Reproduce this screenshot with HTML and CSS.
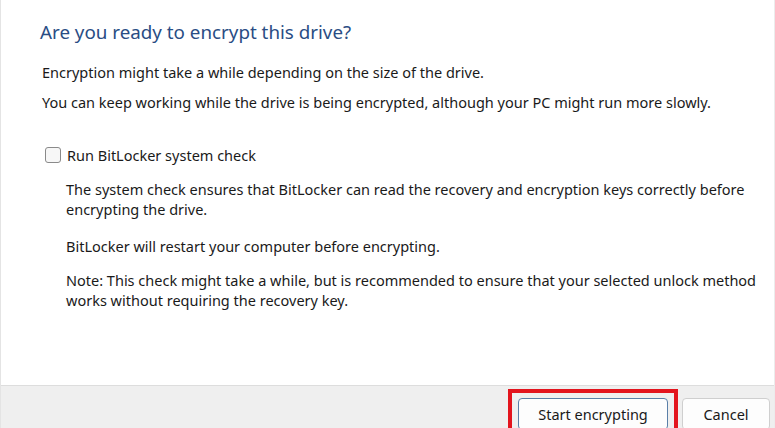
FILE: index.html
```html
<!DOCTYPE html>
<html lang="en">

<head>
    <title>BitLocker Drive Encryption</title>
    <link rel="stylesheet" href="styles.css">
</head>

<body>
    <div class="window">
        <div class="content">
            <h1 class="title">Are you ready to encrypt this drive?</h1>
            <p class="intro">Encryption might take a while depending on the size of the drive.</p>
            <p class="intro">You can keep working while the drive is being encrypted, although your PC might run more slowly.</p>

            <label class="check-row">
                <input type="checkbox" id="system-check">
                <span>Run BitLocker system check</span>
            </label>

            <div class="details">
                <p>The system check ensures that BitLocker can read the recovery and encryption keys correctly before encrypting the drive.</p>
                <p>BitLocker will restart your computer before encrypting.</p>
                <p class="note">Note: This check might take a while, but is recommended to ensure that your selected unlock method works without requiring the recovery key.</p>
            </div>
        </div>
        <div class="footer">
            <div class="highlight">
                <button class="btn btn-default">Start encrypting</button>
            </div>
            <button class="btn">Cancel</button>
        </div>
    </div>
</body>

</html>
```

FILE: styles.css
```css
* {
    margin: 0;
    padding: 0;
    box-sizing: border-box;
}

body {
    width: 775px;
    height: 428px;
    overflow: hidden;
    background: #ffffff;
    font-family: "Noto Sans", "Open Sans", sans-serif;
    font-size: 14.5px;
    color: #1a1a1a;
}

.window {
    height: 428px;
    display: flex;
    flex-direction: column;
    border-left: 1px solid #e4e4e4;
    border-right: 1px solid #ececec;
}

.content {
    flex: 1;
    padding: 19px 0 0 41px;
}

.title {
    font-size: 18.8px;
    font-weight: normal;
    color: #2a4d84;
    line-height: 26px;
    margin-left: -2px;
}

.intro {
    margin-top: 17px;
    line-height: 20px;
}

.intro + .intro {
    margin-top: 10px;
}

.check-row {
    display: flex;
    align-items: center;
    gap: 6px;
    margin-top: 33px;
    margin-left: 3px;
    line-height: 20px;
}

.check-row input {
    appearance: none;
    width: 16px;
    height: 16px;
    border: 1px solid #8a8a8a;
    border-radius: 3px;
    background: #f7f7f7;
}

.details {
    padding-left: 24px;
    padding-right: 8px;
    margin-top: 14px;
    line-height: 20px;
}

.details p + p {
    margin-top: 17px;
}

.details .note {
    margin-top: 14px;
}

.footer {
    height: 43px;
    display: flex;
    justify-content: flex-end;
    align-items: flex-start;
    gap: 4px;
    padding: 3px 4px 0 0;
    background: #efefef;
    border-top: 1px solid #dddddd;
}

.highlight {
    border: 4px solid #e3141d;
    border-bottom: none;
    padding: 5px 6px 0 6px;
    height: 40px;
}

.btn {
    height: 32px;
    font-family: inherit;
    font-size: 14.5px;
    color: #1a1a1a;
    background: #fdfdfd;
    border: 1px solid #cfcfcf;
    border-radius: 4px;
    padding: 0 10px;
    min-width: 88px;
    margin-top: 9px;
    white-space: nowrap;
}

.highlight .btn {
    margin-top: 0;
}

.btn-default {
    width: 150px;
    border: 1px solid #5a7fa8;
}
```
